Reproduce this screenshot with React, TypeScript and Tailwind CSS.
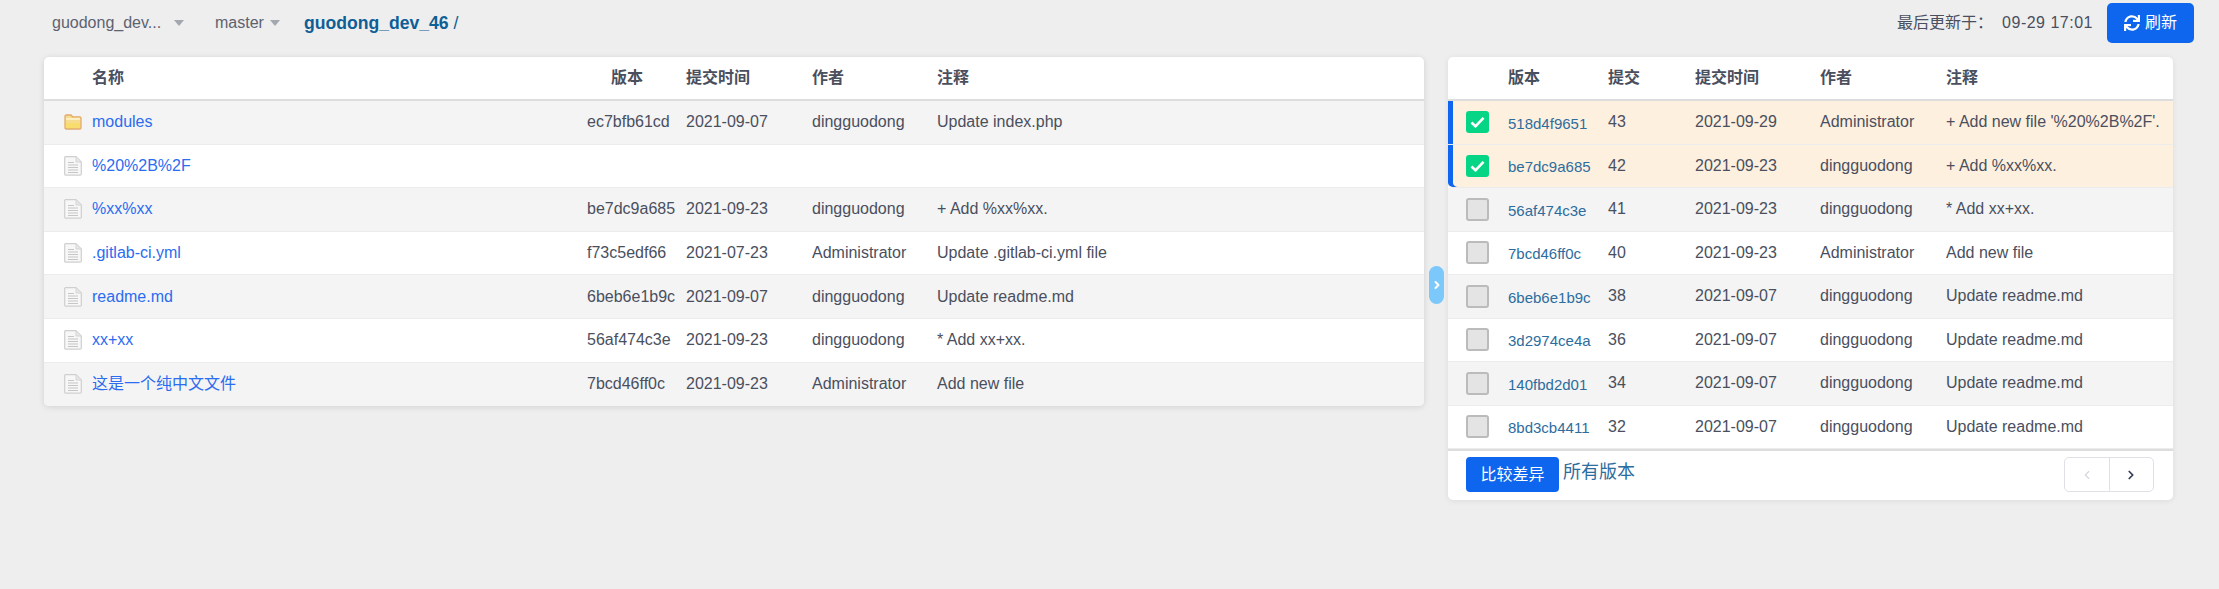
import React from "react";
import { FaSync } from "react-icons/fa";
import { ChevronLeft, ChevronRight } from "lucide-react";

const FONT = "[font-family:'Liberation_Sans','Noto_Sans_CJK_SC',sans-serif]";

type FileRow = { name: string; folder?: boolean; hash: string; time: string; author: string; msg: string };

const files: FileRow[] = [
  { name: "modules", folder: true, hash: "ec7bfb61cd", time: "2021-09-07", author: "dingguodong", msg: "Update index.php" },
  { name: "%20%2B%2F", hash: "", time: "", author: "", msg: "" },
  { name: "%xx%xx", hash: "be7dc9a685", time: "2021-09-23", author: "dingguodong", msg: "+ Add %xx%xx." },
  { name: ".gitlab-ci.yml", hash: "f73c5edf66", time: "2021-07-23", author: "Administrator", msg: "Update .gitlab-ci.yml file" },
  { name: "readme.md", hash: "6beb6e1b9c", time: "2021-09-07", author: "dingguodong", msg: "Update readme.md" },
  { name: "xx+xx", hash: "56af474c3e", time: "2021-09-23", author: "dingguodong", msg: "* Add xx+xx." },
  { name: "这是一个纯中文文件", hash: "7bcd46ff0c", time: "2021-09-23", author: "Administrator", msg: "Add new file" },
];

const versions = [
  { hash: "518d4f9651", n: "43", time: "2021-09-29", author: "Administrator", msg: "+ Add new file '%20%2B%2F'.", on: true },
  { hash: "be7dc9a685", n: "42", time: "2021-09-23", author: "dingguodong", msg: "+ Add %xx%xx.", on: true },
  { hash: "56af474c3e", n: "41", time: "2021-09-23", author: "dingguodong", msg: "* Add xx+xx.", on: false },
  { hash: "7bcd46ff0c", n: "40", time: "2021-09-23", author: "Administrator", msg: "Add new file", on: false },
  { hash: "6beb6e1b9c", n: "38", time: "2021-09-07", author: "dingguodong", msg: "Update readme.md", on: false },
  { hash: "3d2974ce4a", n: "36", time: "2021-09-07", author: "dingguodong", msg: "Update readme.md", on: false },
  { hash: "140fbd2d01", n: "34", time: "2021-09-07", author: "dingguodong", msg: "Update readme.md", on: false },
  { hash: "8bd3cb4411", n: "32", time: "2021-09-07", author: "dingguodong", msg: "Update readme.md", on: false },
];

const FolderIcon = () => (
  <svg width="18" height="16" viewBox="0 0 18 16" className="shrink-0">
    <path d="M1 2.200C1 1.500 1.500 1 2.200 1H7l1.600 1.800h7.200c.7 0 1.200.5 1.200 1.200v9.800c0 .7-.5 1.200-1.200 1.200H2.200C1.500 15 1 14.500 1 13.800Z" fill="#f6dc8e" stroke="#e2ab6c" strokeWidth="1.300" />
    <path d="M2 5h14" stroke="#fff6cf" strokeWidth="1.600" />
    <path d="M2 9h14v5H2Z" fill="#f9dc6e" />
  </svg>
);

const FileIcon = () => (
  <svg width="18" height="20" viewBox="0 0 18 20" className="shrink-0">
    <path d="M1.500.7h10.500l5.300 5.300v12c0 .7-.5 1.200-1.200 1.200H1.500c-.5 0-.8-.4-.8-.9V1.500c0-.5.300-.8.800-.8Z" fill="#f7f7f7" stroke="#cfcfcf" strokeWidth="1.200" />
    <path d="M12 1v5h5" fill="#e8e8e8" stroke="#d4d4d4" />
    <path d="M4 6.500h6M4 9h10M4 11.500h10M4 14h10M4 16.500h10" stroke="#c6c6c6" strokeWidth="1.100" />
  </svg>
);

const Caret = () => (
  <span className="ml-[6px] inline-block h-0 w-0 border-x-[5px] border-t-[6px] border-x-transparent border-t-[#a3a7b0]" />
);

export default function App() {
  return (
    <div className={`${FONT} min-h-screen bg-[#eeeeee] text-[16px] text-[#4a4f5e]`}>
      <div className="flex h-[57px] items-start pl-[52px] pr-[25px] pt-[3px]">
        <div className="flex h-[40px] items-center">
          <span className="flex items-center text-[#5d6270]">
            <span className="w-[116px]">guodong_dev...</span>
            <Caret />
          </span>
          <span className="ml-[31px] flex items-center text-[#5d6270]">master<Caret /></span>
          <span className="ml-[24px] text-[17.600px] font-bold text-[#0f5f96]">guodong_dev_46</span>
          <span className="ml-[5px] text-[17.600px] text-[#0f5f96]">/</span>
        </div>
        <div className="ml-auto flex items-center">
          <span>最后更新于：</span>
          <span className="ml-[9px] tracking-[0.5px]">09-29 17:01</span>
          <button className="ml-[14px] flex h-[40px] w-[87px] items-center justify-center gap-[5px] rounded-[5px] bg-[#0d66ed] text-white">
            <FaSync className="h-[16px] w-[16px]" />
            <span>刷新</span>
          </button>
        </div>
      </div>

      <div className="flex items-start pl-[44px]">
        <div className="w-[1380px] overflow-hidden rounded-[5px] bg-white shadow-[0_1px_6px_rgba(0,0,0,0.12)]">
          <div className="grid h-[44px] grid-cols-[524px_118px_126px_125px_1fr] items-center border-b-2 border-[#dddddd] font-bold">
            <span className="pl-[48px]">名称</span>
            <span className="text-center">版本</span>
            <span>提交时间</span>
            <span>作者</span>
            <span>注释</span>
          </div>
          {files.map((f, i) => (
            <div
              key={f.name}
              className={`grid h-[43.6px] grid-cols-[524px_118px_126px_125px_1fr] items-center border-b border-[#ececec] last:border-b-0 ${i % 2 === 0 ? "bg-[#f4f4f4]" : "bg-white"}`}
            >
              <span className="flex items-center gap-[10px] pl-[20px] text-[#2b6cf0]">
                {f.folder ? <FolderIcon /> : <FileIcon />}
                <span>{f.name}</span>
              </span>
              <span className="whitespace-nowrap pl-[19px]">{f.hash}</span>
              <span>{f.time}</span>
              <span>{f.author}</span>
              <span>{f.msg}</span>
            </div>
          ))}
        </div>

        <div className="relative ml-[24px] w-[725px] rounded-[5px] bg-white shadow-[0_1px_6px_rgba(0,0,0,0.08)]">
          <button className="absolute left-[-19px] top-[209px] flex h-[38px] w-[15px] items-center justify-center rounded-full bg-[#7cc8fb] text-white">
            <ChevronRight className="h-[12px] w-[12px]" strokeWidth={4} />
          </button>
          <div className="grid h-[44px] grid-cols-[60px_100px_87px_125px_126px_1fr] items-center border-b-2 border-[#dddddd] font-bold">
            <span />
            <span>版本</span>
            <span>提交</span>
            <span>提交时间</span>
            <span>作者</span>
            <span>注释</span>
          </div>
          {versions.map((v, i) => (
            <div
              key={v.hash}
              className={`grid h-[43.5px] grid-cols-[60px_100px_87px_125px_126px_1fr] items-center border-b border-[#ececec] last:border-b-0 ${v.on ? "bg-[#fef0df] shadow-[inset_5px_0_0_#0d66ed]" : i % 2 === 0 ? "bg-[#f4f4f4]" : "bg-white"} ${i === 1 ? "rounded-bl-[5px]" : ""}`}
            >
              <span className="pl-[18px]">
                {v.on ? (
                  <span className="flex h-[22px] w-[23px] items-center justify-center rounded-[3px] bg-[#07d586]">
                    <svg width="15" height="12" viewBox="0 0 15 12" fill="none">
                      <path d="M1.500 6.500 5.500 10.300 13.500 1.800" stroke="#fff" strokeWidth="2.600" />
                    </svg>
                  </span>
                ) : (
                  <span className="block h-[23px] w-[23px] rounded-[3px] border-2 border-[#bbbbbb] bg-[#e4e4e4]" />
                )}
              </span>
              <span className="pt-[3px] text-[15px] text-[#2d6d9e]">{v.hash}</span>
              <span>{v.n}</span>
              <span>{v.time}</span>
              <span>{v.author}</span>
              <span className="whitespace-nowrap">{v.msg}</span>
            </div>
          ))}
          <div className="flex h-[51px] items-start border-t-2 border-[#dddddd] pl-[18px] pr-[19px] pt-[6px]">
            <button className="h-[35px] w-[93px] rounded-[4px] bg-[#0d66ed] text-white">比较差异</button>
            <span className="ml-[4px] mt-[2px] text-[18px] text-[#2d6d9e]">所有版本</span>
            <div className="ml-auto flex h-[35px] w-[90px] overflow-hidden rounded-[5px] border border-[#dfe1e6]">
              <span className="flex flex-1 items-center justify-center border-r border-[#dfe1e6] text-[#d5d7dc]">
                <ChevronLeft className="h-[14px] w-[14px]" strokeWidth={2} />
              </span>
              <span className="flex flex-1 items-center justify-center text-[#333c55]">
                <ChevronRight className="h-[14px] w-[14px]" strokeWidth={3} />
              </span>
            </div>
          </div>
        </div>
      </div>
    </div>
  );
}
